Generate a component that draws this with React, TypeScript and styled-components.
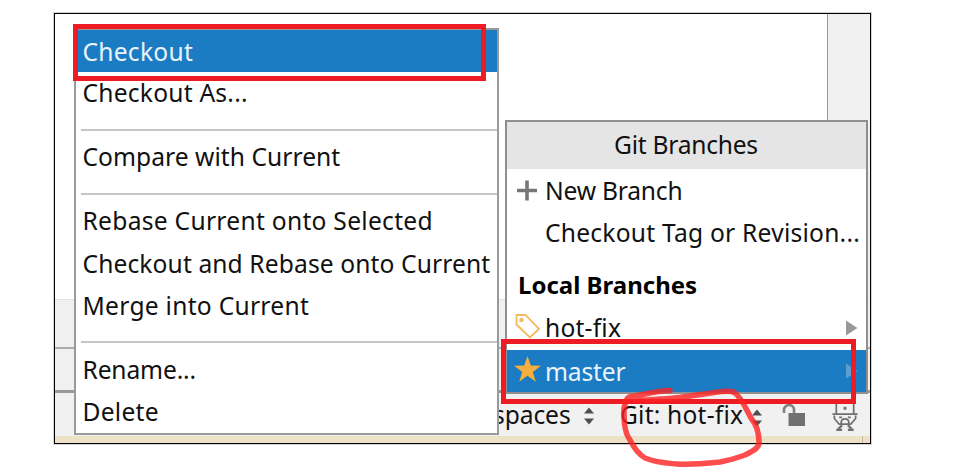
import React from "react";
import styled, { createGlobalStyle } from "styled-components";

const GlobalStyle = createGlobalStyle`
  * { box-sizing: border-box; }
  body { margin: 0; background: #fff; font-family: "Noto Sans", "Open Sans", sans-serif; color: #111; }
`;

const Page = styled.main`
  position: relative;
  width: 957px;
  height: 473px;
  padding: 13px 0 0 54px;
  overflow: hidden;
  font-size: 24.6px;
  white-space: nowrap;
`;

const Window = styled.section`
  position: relative;
  display: flex;
  flex-direction: column;
  width: 817px;
  height: 431px;
  border: 1px solid #000;
  box-shadow: 0 0 0 1px #d4d4d4;
`;

const Editor = styled.div`
  display: flex;
  justify-content: flex-end;
  height: 285px;
`;

const SideStripe = styled.aside`
  width: 43px;
  background: #f1f1f1;
  border-left: 1px solid #999;
`;

const Band = styled.div<{ $height: number; $line: string; $size: number }>`
  height: ${(p) => p.$height}px;
  background: #f0f0f0;
  border-top: ${(p) => p.$size}px solid ${(p) => p.$line};
`;

const StatusBar = styled.footer`
  display: flex;
  align-items: flex-start;
  height: 46px;
  padding-left: 438px;
  background: #f1f1f1;
  border-top: 3px solid #999;
`;

const StatusText = styled.span<{ $width: number; $spacing?: number }>`
  flex: none;
  width: ${(p) => p.$width}px;
  line-height: 42px;
  margin-top: 1px;
  letter-spacing: ${(p) => p.$spacing ?? 0}px;
`;

const GitStatus = styled(StatusText)`
  margin-left: 26px;
`;

const StatusIcon = styled.svg<{ $gap?: number; $top?: number }>`
  flex: none;
  margin-left: ${(p) => p.$gap ?? 0}px;
  margin-top: ${(p) => p.$top ?? 0}px;
`;

const Desktop = styled.div`
  display: flex;
  flex: 1;
  justify-content: flex-end;
  padding-right: 7px;
  background: #ece2c8;
`;

const DesktopEdge = styled.div`
  width: 1px;
  background: #c3b9a2;
`;

const Menu = styled.nav`
  position: absolute;
  left: 19px;
  top: 14px;
  width: 425px;
  height: 407px;
  background: #fff;
  border: 2px solid #9a9a9a;
`;

const MenuItem = styled.div<{ $selected?: boolean; $height?: number; $spacing?: number }>`
  height: ${(p) => p.$height ?? 42}px;
  padding-left: 6.5px;
  line-height: ${(p) => (p.$selected ? 43 : 42)}px;
  letter-spacing: ${(p) => p.$spacing ?? 0}px;
  color: ${(p) => (p.$selected ? "#e9f3fb" : "#111")};
  background: ${(p) => (p.$selected ? "#1b7cc3" : "transparent")};
`;

const Separator = styled.hr<{ $before: number; $after: number }>`
  height: 2px;
  margin: ${(p) => p.$before}px 0 ${(p) => p.$after}px 5px;
  border: 0;
  background: #c6c6c6;
`;

const Popup = styled.section`
  position: absolute;
  left: 450px;
  top: 106px;
  width: 363px;
  height: 274px;
  background: #fff;
  border: 2px solid #8f8f8f;
`;

const PopupTitle = styled.header`
  height: 47px;
  line-height: 45px;
  margin-bottom: 1px;
  padding-left: 107px;
  letter-spacing: -0.25px;
  background: #e5e5e5;
`;

const BranchRow = styled.div<{ $selected?: boolean; $height?: number; $spacing?: number }>`
  display: flex;
  height: ${(p) => p.$height ?? 42}px;
  line-height: ${(p) => (p.$selected ? 43 : 42)}px;
  letter-spacing: ${(p) => p.$spacing ?? 0}px;
  color: ${(p) => (p.$selected ? "#e9f3fb" : "#111")};
  background: ${(p) => (p.$selected ? "#1b7cc3" : "transparent")};
`;

const RowIcon = styled.svg`
  flex: none;
  width: 38px;
  height: 42px;
`;

const RowLabel = styled.span`
  flex: 1;
`;

const Arrow = styled.svg`
  flex: none;
  width: 21px;
  height: 42px;
`;

const GroupTitle = styled.h2`
  height: 43px;
  margin: 10px 0 0;
  padding-left: 11px;
  font-size: 24px;
  font-weight: 700;
  line-height: 42px;
  color: #000;
`;

const Highlight = styled.div<{ $x: number; $y: number; $w: number; $h: number }>`
  position: absolute;
  left: ${(p) => p.$x}px;
  top: ${(p) => p.$y}px;
  width: ${(p) => p.$w}px;
  height: ${(p) => p.$h}px;
  border: 5px solid #ed1c24;
`;

const PenMark = styled.svg`
  position: absolute;
  left: 600px;
  top: 370px;
`;

const UpDown = ({ gap, top }: { gap: number; top: number }) => (
  <StatusIcon $gap={gap} $top={top} width="10" height="18" viewBox="0 0 10 18">
    <path d="M0 6.5 5 .5l5 6zM0 11.5h10l-5 6z" fill="#505050" />
  </StatusIcon>
);

const Chevron = ({ color }: { color: string }) => (
  <Arrow viewBox="0 0 21 42">
    <path d="M1 13.5 12.5 21 1 28.5z" fill={color} />
  </Arrow>
);

export default function App() {
  return (
    <Page>
      <GlobalStyle />
      <Window>
        <Editor>
          <SideStripe />
        </Editor>
        <Band $height={48} $line="#e2e2e2" $size={1} />
        <Band $height={43} $line="#adadad" $size={2} />
        <StatusBar>
          <StatusText $width={91} $spacing={-0.1}>spaces</StatusText>
          <UpDown gap={0} top={14} />
          <GitStatus $width={105} $spacing={0.2}>Git: hot-fix</GitStatus>
          <UpDown gap={27} top={16} />
          <StatusIcon $gap={20} $top={10} width="24" height="24" viewBox="0 0 24 24">
            <path d="M2 10V7a5 5 0 0 1 10 0v4" fill="none" stroke="#808080" strokeWidth="2.6" />
            <path d="M6.5 10H23v13H6.5z" fill="#707070" />
          </StatusIcon>
          <StatusIcon $gap={26} $top={9} width="26" height="29" viewBox="0 0 26 30" fill="none" stroke="#707070" strokeWidth="1.8">
            <path d="M4 12V1h18v11M0 12.500h26" />
            <path d="M11.500 5h3v3h-3z" fill="#707070" stroke="none" />
            <path d="M2 14v3l5 6h12l5-6v-3M7 16h3M16 16h3M9 22c0-6 8-6 8 0" />
            <path d="M4 29h6M16 29h6M6 28l4-4M20 28l-4-4" strokeWidth="2.4" />
          </StatusIcon>
        </StatusBar>
        <Desktop>
          <DesktopEdge />
        </Desktop>

        <Popup>
          <PopupTitle>Git Branches</PopupTitle>
          <BranchRow $spacing={-0.2}>
            <RowIcon viewBox="0 0 38 42">
              <path d="M10 20.5h20M20 10.5v20" stroke="#777" strokeWidth="3.6" />
            </RowIcon>
            <RowLabel>New Branch</RowLabel>
          </BranchRow>
          <BranchRow $spacing={0.23}>
            <RowIcon />
            <RowLabel>Checkout Tag or Revision...</RowLabel>
          </BranchRow>
          <GroupTitle>Local Branches</GroupTitle>
          <BranchRow $height={43} $spacing={0.2}>
            <RowIcon viewBox="0 0 38 42">
              <path d="M9.500 8h9l13.500 14-9 8.500L9.500 17.500z" fill="none" stroke="#f5b95b" strokeWidth="1.8" />
              <circle cx="14.500" cy="13" r="2.2" fill="#f5b95b" />
            </RowIcon>
            <RowLabel>hot-fix</RowLabel>
            <Chevron color="#999" />
          </BranchRow>
          <BranchRow $selected $spacing={-0.15}>
            <RowIcon viewBox="0 0 38 42">
              <path d="m20.500 6 3.300 9.500 10.200.2-8.200 6.200 3 9.800-8.300-5.900-8.300 5.900 3-9.800L7 15.700l10.200-.2z" fill="#f4af3d" />
            </RowIcon>
            <RowLabel>master</RowLabel>
            <Chevron color="#5ba0d0" />
          </BranchRow>
        </Popup>

        <Menu>
          <MenuItem $selected $spacing={0.25}>Checkout</MenuItem>
          <MenuItem $spacing={0.22}>Checkout As...</MenuItem>
          <Separator $before={15} $after={5} />
          <MenuItem $spacing={0.04}>Compare with Current</MenuItem>
          <Separator $before={15} $after={5} />
          <MenuItem $height={43} $spacing={0.28}>Rebase Current onto Selected</MenuItem>
          <MenuItem $spacing={0.11}>Checkout and Rebase onto Current</MenuItem>
          <MenuItem $spacing={0.27}>Merge into Current</MenuItem>
          <Separator $before={14} $after={6} />
          <MenuItem $spacing={-0.15}>Rename...</MenuItem>
          <MenuItem $spacing={0.25}>Delete</MenuItem>
        </Menu>
      </Window>

      <Highlight $x={73} $y={24} $w={413} $h={57} />
      <Highlight $x={501} $y={339} $w={355} $h={65} />
      <PenMark width="180" height="103" viewBox="600 370 180 103">
        <path
          d="M670 390.500C660 390 643 395 634 396C626 396 626 401 624 408C624 420 624 432 630 440C635 450 640 455 645 458C658 463 666 463 677 464C690 465 710 463 720 462C732 460 739 457 745 455C755 450 760 447 759 441C758 427 755 424 751 418C745 407 741 397 735 393C730 389 714 393 704 394C690 396 672 399 660 399C645 400 636 401 629 399"
          fill="none"
          stroke="#ff2020"
          strokeOpacity=".8"
          strokeWidth="5.500"
          strokeLinecap="round"
          strokeLinejoin="round"
        />
      </PenMark>
    </Page>
  );
}
